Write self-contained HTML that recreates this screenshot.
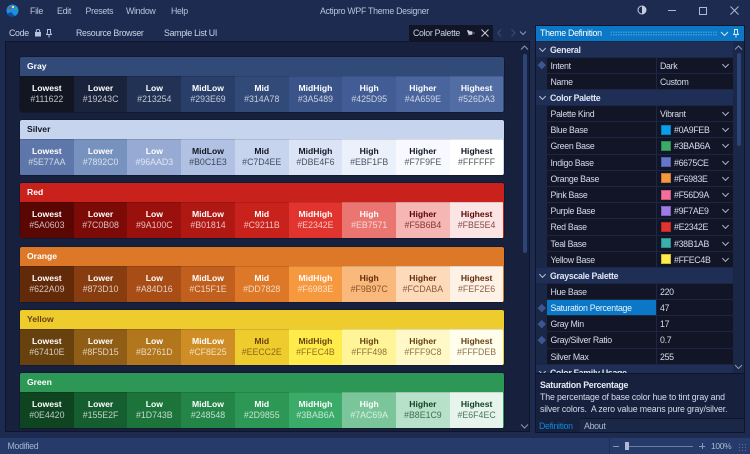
<!DOCTYPE html>
<html><head><meta charset="utf-8"><style>
*{box-sizing:border-box;margin:0;padding:0}
html,body{width:750px;height:454px;overflow:hidden;background:#1d2b50;font-family:"Liberation Sans",sans-serif;color:#d5dcec;font-size:8.8px;letter-spacing:-.3px}
.a{position:absolute;white-space:nowrap}
.m{top:5px;line-height:12px;font-size:8.8px;color:#b9c3da}
.t{top:27px;line-height:12px;font-size:8.8px;color:#ccd4e6}
.card{position:absolute;left:20px;width:483.5px;height:55px;border-radius:2px;overflow:hidden;box-shadow:0 0 0 .5px #0d1428;letter-spacing:0}
.card .h{height:19px;line-height:19px;padding-left:7px;font-weight:bold;font-size:8.6px;color:#fff}
.r{display:flex;height:36px;position:relative}
.r:before{content:"";position:absolute;left:0;top:0;width:100%;height:1px;background:rgba(0,0,0,.12)}
.r div{flex:1;text-align:center;color:#fff;font-size:8.6px;line-height:11px;padding-top:7px;font-weight:bold}
.r div span{display:block;font-weight:normal;opacity:.72;font-size:8.8px}
.d div{color:#111622}.rd div{color:#5a0603}.o div{color:#622a09}.y div{color:#67410e}.g div{color:#0e4420}
.pn,.pv{position:absolute;height:15.2px;line-height:16px;background:#111526;font-size:8.8px;color:#d5dcec;white-space:nowrap}
.pn{left:547px;width:109px;padding-left:3.5px}
.pv{left:657px;width:76px;padding-left:3px}
.ph{position:absolute;left:536px;width:197px;height:15.2px;line-height:16px;background:#1f2e55;font-weight:bold;font-size:8.8px;color:#dfe5f2;padding-left:14px;white-space:nowrap}
.ph:before{content:"";position:absolute;left:4px;top:4px;width:4px;height:4px;border-right:1px solid #b9c3da;border-bottom:1px solid #b9c3da;transform:rotate(45deg)}
.sw{position:absolute;left:661px;width:10px;height:10px;border:.5px solid #0003}
.hx{padding-left:17px}
.cv:after{content:"";position:absolute;right:5px;top:4px;width:4px;height:4px;border-right:1px solid #aab5cf;border-bottom:1px solid #aab5cf;transform:rotate(45deg)}
.dm{position:absolute;left:539px;width:5.5px;height:5.5px;background:#3b5790;transform:rotate(45deg)}
</style></head><body>
<svg class="a" style="left:6px;top:4px" width="13" height="13" viewBox="0 0 13 13"><circle cx="6.5" cy="6.5" r="6" fill="#1b8fe0"/><path d="M9 12 L5 8 L1 10 A6 6 0 0 0 9 12Z" fill="#0d4f9c"/><circle cx="4" cy="4" r="1.2" fill="#e2342e"/><circle cx="7" cy="3" r="1.1" fill="#ffec4b"/><circle cx="10" cy="5" r="1.1" fill="#3bab6a"/></svg>
<div class="a m" style="left:30px">File</div><div class="a m" style="left:57px">Edit</div><div class="a m" style="left:85.5px">Presets</div><div class="a m" style="left:126px">Window</div><div class="a m" style="left:171px">Help</div>
<div class="a m" style="left:320px">Actipro WPF Theme Designer</div>
<svg class="a" style="left:637px;top:5px" width="10" height="10" viewBox="0 0 10 10"><circle cx="5" cy="5" r="4" fill="none" stroke="#c5cee0"/><path d="M5 1A4 4 0 0 1 5 9Z" fill="#c5cee0"/></svg>
<div class="a" style="left:668px;top:10px;width:8px;height:1px;background:#aeb9d2"></div>
<div class="a" style="left:699px;top:6.5px;width:8px;height:8px;border:1px solid #aeb9d2"></div>
<svg class="a" style="left:730px;top:6px" width="9" height="9" viewBox="0 0 9 9"><path d="M.5 .5L8.5 8.5M8.5 .5L.5 8.5" stroke="#aeb9d2"/></svg>

<div class="a t" style="left:9px">Code</div>
<svg class="a" style="left:35px;top:29px" width="6" height="8" viewBox="0 0 6 8"><rect y="3" width="6" height="4.5" fill="#b9c3da"/><path d="M1.3 3V2A1.7 1.7 0 0 1 4.7 2V3" fill="none" stroke="#b9c3da"/></svg>
<svg class="a" style="left:46px;top:29px" width="6" height="9" viewBox="0 0 6 9"><path d="M1.5 .5H4.5V4L5.5 5.5H.5L1.5 4ZM3 5.5V8.5" fill="none" stroke="#b9c3da"/></svg>
<div class="a t" style="left:76px">Resource Browser</div><div class="a t" style="left:164px">Sample List UI</div>
<div class="a" style="left:409px;top:25px;width:84px;height:16px;background:#111526"></div>
<div class="a t" style="left:413px">Color Palette</div>
<svg class="a" style="left:467px;top:30px" width="8" height="6" viewBox="0 0 8 6"><path d="M0 .5H2V1.5H5V4.5H2V5.5M5 3H8" fill="#c5cee0" stroke="#c5cee0" stroke-width=".6"/></svg>
<svg class="a" style="left:481px;top:29px" width="8" height="8" viewBox="0 0 8 8"><path d="M.5 .5L7.5 7.5M7.5 .5L.5 7.5" stroke="#c5cee0"/></svg>
<svg class="a" style="left:497px;top:29px" width="30" height="8" viewBox="0 0 30 8"><path d="M4 .5L.8 4L4 7.5M14.5 .5L18 4L14.5 7.5" fill="none" stroke="#3d4f7a"/><path d="M25 2.5L28 5.5L31 2.5" fill="none" stroke="#8a97b5" transform="translate(-2 0)"/></svg>

<div class="a" style="left:5px;top:41px;width:525px;height:391px;background:#17213d;border:1px solid #0e1529;border-top:1.5px solid #0e1529"></div>
<svg class="a" style="left:520px;top:45px" width="9" height="6" viewBox="0 0 9 6"><path d="M1 4.5L4.5 1L8 4.5" fill="none" stroke="#8a97b5"/></svg>
<div class="a" style="left:522.5px;top:54px;width:4px;height:199px;background:#2d4478;border-radius:2px"></div>
<svg class="a" style="left:520px;top:423px" width="9" height="6" viewBox="0 0 9 6"><path d="M1 1.5L4.5 5L8 1.5" fill="none" stroke="#8a97b5"/></svg>

<div class="card" style="top:57px;background:#314A78"><div class="h">Gray</div><div class="r">
<div style="background:#111622">Lowest<span>#111622</span></div><div style="background:#19243C">Lower<span>#19243C</span></div><div style="background:#213254">Low<span>#213254</span></div><div style="background:#293E69">MidLow<span>#293E69</span></div><div style="background:#314A78">Mid<span>#314A78</span></div><div style="background:#3A5489">MidHigh<span>#3A5489</span></div><div style="background:#425D95">High<span>#425D95</span></div><div style="background:#4A659E">Higher<span>#4A659E</span></div><div style="background:#526DA3">Highest<span>#526DA3</span></div></div></div>

<div class="card d" style="top:120px;background:#C7D4EE"><div class="h" style="color:#111622">Silver</div><div class="r">
<div style="background:#5E77AA;color:#fff">Lowest<span>#5E77AA</span></div><div style="background:#7892C0;color:#fff">Lower<span>#7892C0</span></div><div style="background:#96AAD3;color:#fff">Low<span>#96AAD3</span></div><div style="background:#B0C1E3">MidLow<span>#B0C1E3</span></div><div style="background:#C7D4EE">Mid<span>#C7D4EE</span></div><div style="background:#DBE4F6">MidHigh<span>#DBE4F6</span></div><div style="background:#EBF1FB">High<span>#EBF1FB</span></div><div style="background:#F7F9FE">Higher<span>#F7F9FE</span></div><div style="background:#FFFFFF">Highest<span>#FFFFFF</span></div></div></div>

<div class="card rd" style="top:183px;background:#C9211B"><div class="h">Red</div><div class="r">
<div style="background:#5A0603;color:#fff">Lowest<span>#5A0603</span></div><div style="background:#7C0B08;color:#fff">Lower<span>#7C0B08</span></div><div style="background:#9A100C;color:#fff">Low<span>#9A100C</span></div><div style="background:#B01814;color:#fff">MidLow<span>#B01814</span></div><div style="background:#C9211B;color:#fff">Mid<span>#C9211B</span></div><div style="background:#E2342E;color:#fff">MidHigh<span>#E2342E</span></div><div style="background:#EB7571;color:#fff">High<span>#EB7571</span></div><div style="background:#F5B6B4">Higher<span>#F5B6B4</span></div><div style="background:#FBE5E4">Highest<span>#FBE5E4</span></div></div></div>

<div class="card o" style="top:246.5px;background:#DD7828"><div class="h">Orange</div><div class="r">
<div style="background:#622A09;color:#fff">Lowest<span>#622A09</span></div><div style="background:#873D10;color:#fff">Lower<span>#873D10</span></div><div style="background:#A84D16;color:#fff">Low<span>#A84D16</span></div><div style="background:#C15F1E;color:#fff">MidLow<span>#C15F1E</span></div><div style="background:#DD7828;color:#fff">Mid<span>#DD7828</span></div><div style="background:#F6983E;color:#fff">MidHigh<span>#F6983E</span></div><div style="background:#F9B97C">High<span>#F9B97C</span></div><div style="background:#FCDABA">Higher<span>#FCDABA</span></div><div style="background:#FEF2E6">Highest<span>#FEF2E6</span></div></div></div>

<div class="card y" style="top:309.5px;background:#EECC2E"><div class="h" style="color:#67410e">Yellow</div><div class="r">
<div style="background:#67410E;color:#fff">Lowest<span>#67410E</span></div><div style="background:#8F5D15;color:#fff">Lower<span>#8F5D15</span></div><div style="background:#B2761D;color:#fff">Low<span>#B2761D</span></div><div style="background:#CF8E25;color:#fff">MidLow<span>#CF8E25</span></div><div style="background:#EECC2E">Mid<span>#EECC2E</span></div><div style="background:#FFEC4B">MidHigh<span>#FFEC4B</span></div><div style="background:#FFF498">High<span>#FFF498</span></div><div style="background:#FFF9C8">Higher<span>#FFF9C8</span></div><div style="background:#FFFDEB">Highest<span>#FFFDEB</span></div></div></div>

<div class="card g" style="top:373px;background:#2D9855"><div class="h">Green</div><div class="r">
<div style="background:#0E4420;color:#fff">Lowest<span>#0E4420</span></div><div style="background:#155E2F;color:#fff">Lower<span>#155E2F</span></div><div style="background:#1D743B;color:#fff">Low<span>#1D743B</span></div><div style="background:#248548;color:#fff">MidLow<span>#248548</span></div><div style="background:#2D9855;color:#fff">Mid<span>#2D9855</span></div><div style="background:#3BAB6A;color:#fff">MidHigh<span>#3BAB6A</span></div><div style="background:#7AC69A;color:#fff">High<span>#7AC69A</span></div><div style="background:#B8E1C9">Higher<span>#B8E1C9</span></div><div style="background:#E6F4EC">Highest<span>#E6F4EC</span></div></div></div>

<div class="a" style="left:535px;top:25px;width:210px;height:408px;background:#1a2747;border:1px solid #0e1529"></div>
<div class="a" style="left:536px;top:26px;width:208px;height:15px;background:#0a78c6"></div>
<div class="a" style="left:540px;top:27px;line-height:13px;font-size:8.8px;color:#fff">Theme Definition</div>
<div class="a" style="left:610px;top:31px;width:107px;height:5px;background-image:radial-gradient(#3f9ad8 .7px,transparent .8px);background-size:2.5px 2.5px"></div>
<svg class="a" style="left:720px;top:31px" width="9" height="6" viewBox="0 0 9 6"><path d="M1 1L4.5 4.5L8 1" fill="none" stroke="#d5e8f6"/></svg>
<svg class="a" style="left:733px;top:29px" width="6" height="9" viewBox="0 0 6 9"><path d="M1.5 .5H4.5V4L5.5 5.5H.5L1.5 4ZM3 5.5V8.5" fill="none" stroke="#d5e8f6"/></svg>

<div style="position:absolute;left:0;top:0;width:750px;height:374px;overflow:hidden">
<div class="ph" style="top:41.5px">General</div>
<div class="pn" style="top:57.5px">Intent</div><div class="pv cv" style="top:57.5px">Dark</div>
<div class="pn" style="top:73.5px">Name</div><div class="pv" style="top:73.5px">Custom</div>
<div class="ph" style="top:89.7px">Color Palette</div>
<div class="pn" style="top:106px">Palette Kind</div><div class="pv cv" style="top:106px">Vibrant</div>
<div class="pn" style="top:122.2px">Blue Base</div><div class="pv cv hx" style="top:122.2px">#0A9FEB</div><div class="sw" style="top:124.7px;background:#0A9FEB"></div>
<div class="pn" style="top:138.4px">Green Base</div><div class="pv cv hx" style="top:138.4px">#3BAB6A</div><div class="sw" style="top:140.9px;background:#3BAB6A"></div>
<div class="pn" style="top:154.6px">Indigo Base</div><div class="pv cv hx" style="top:154.6px">#6675CE</div><div class="sw" style="top:157.1px;background:#6675CE"></div>
<div class="pn" style="top:170.8px">Orange Base</div><div class="pv cv hx" style="top:170.8px">#F6983E</div><div class="sw" style="top:173.3px;background:#F6983E"></div>
<div class="pn" style="top:187px">Pink Base</div><div class="pv cv hx" style="top:187px">#F56D9A</div><div class="sw" style="top:189.5px;background:#F56D9A"></div>
<div class="pn" style="top:203.2px">Purple Base</div><div class="pv cv hx" style="top:203.2px">#9F7AE9</div><div class="sw" style="top:205.7px;background:#9F7AE9"></div>
<div class="pn" style="top:219.4px">Red Base</div><div class="pv cv hx" style="top:219.4px">#E2342E</div><div class="sw" style="top:221.9px;background:#E2342E"></div>
<div class="pn" style="top:235.6px">Teal Base</div><div class="pv cv hx" style="top:235.6px">#38B1AB</div><div class="sw" style="top:238.1px;background:#38B1AB"></div>
<div class="pn" style="top:251.8px">Yellow Base</div><div class="pv cv hx" style="top:251.8px">#FFEC4B</div><div class="sw" style="top:254.3px;background:#FFEC4B"></div>
<div class="ph" style="top:267.6px">Grayscale Palette</div>
<div class="pn" style="top:283.8px">Hue Base</div><div class="pv" style="top:283.8px">220</div>
<div class="pn" style="top:300px;background:#0a78c6;color:#e8f2fa">Saturation Percentage</div><div class="pv" style="top:300px">47</div>
<div class="pn" style="top:316.2px">Gray Min</div><div class="pv" style="top:316.2px">17</div>
<div class="pn" style="top:332.4px">Gray/Silver Ratio</div><div class="pv" style="top:332.4px">0.7</div>
<div class="pn" style="top:348.6px">Silver Max</div><div class="pv" style="top:348.6px">255</div>
<div class="ph" style="top:364.8px">Color Family Usage</div>
</div>
<div class="dm" style="top:62px"></div><div class="dm" style="top:304.5px"></div><div class="dm" style="top:320.7px"></div><div class="dm" style="top:336.9px"></div>
<svg class="a" style="left:734px;top:45px" width="9" height="6" viewBox="0 0 9 6"><path d="M1 4.5L4.5 1L8 4.5" fill="none" stroke="#8a97b5"/></svg>
<div class="a" style="left:736.5px;top:53px;width:4px;height:93px;background:#2d4478;border-radius:2px"></div>
<svg class="a" style="left:734px;top:364px" width="9" height="6" viewBox="0 0 9 6"><path d="M1 1L4.5 4.5L8 1" fill="none" stroke="#8a97b5"/></svg>

<div class="a" style="left:536px;top:373px;width:208px;height:46px;background:#17213d;border-top:1px solid #0e1529;border-bottom:1px solid #0e1529"></div>
<div class="a" style="left:540px;top:379px;line-height:12px;font-weight:bold;font-size:8.8px;letter-spacing:-.25px;color:#e6ebf5">Saturation Percentage</div>
<div class="a" style="left:540px;top:391px;line-height:12px;font-size:8.8px;letter-spacing:-.15px;color:#d5dcec">The percentage of base color hue to tint gray and</div>
<div class="a" style="left:540px;top:403px;line-height:12px;font-size:8.8px;letter-spacing:-.15px;color:#d5dcec">silver colors.&nbsp; A zero value means pure gray/silver.</div>
<div class="a" style="left:536px;top:418px;width:44px;height:14px;background:#17213d"></div>
<div class="a" style="left:539px;top:420px;line-height:12px;font-size:8.8px;color:#0a8ae0">Definition</div>
<div class="a" style="left:584px;top:420px;line-height:12px;font-size:8.8px;color:#aeb9d2">About</div>

<div class="a" style="left:0;top:438px;width:750px;height:16px;background:#273b6b"></div>
<div class="a" style="left:7.5px;top:440px;line-height:12px;font-size:8.8px;color:#a6b3d0">Modified</div>
<div class="a" style="left:609px;top:438px;width:1px;height:16px;background:#1f2f58"></div>
<div class="a" style="left:613px;top:445.5px;width:6px;height:1px;background:#8a97b5"></div>
<div class="a" style="left:625px;top:445.5px;width:68px;height:1px;background:#6d7ca0"></div>
<div class="a" style="left:625px;top:442px;width:4px;height:8px;background:#aeb9d2"></div>
<div class="a" style="left:699px;top:445.5px;width:6px;height:1px;background:#8a97b5"></div>
<div class="a" style="left:701.5px;top:443px;width:1px;height:6px;background:#8a97b5"></div>
<div class="a" style="left:711px;top:440px;line-height:12px;font-size:8.4px;color:#aeb9d2">100%</div>
<div class="a" style="left:738px;top:443px;width:9px;height:9px;background-image:radial-gradient(#5a6d98 .7px,transparent .8px);background-size:3px 3px"></div>
</body></html>
